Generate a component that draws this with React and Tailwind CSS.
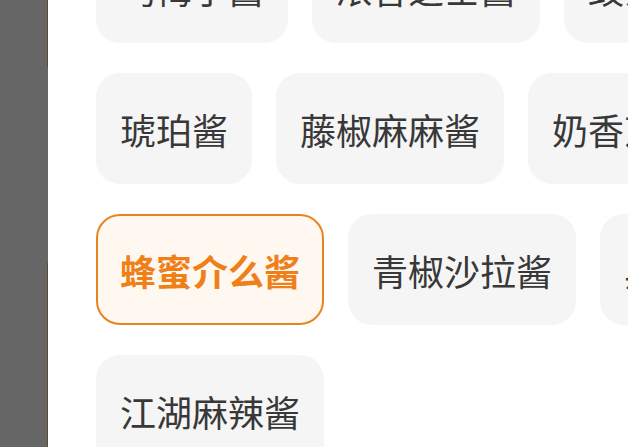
import React from "react";

const rows = [
  ["乌梅子酱", "浓香芝士酱", "豉汁酱"],
  ["琥珀酱", "藤椒麻麻酱", "奶香芝士酱"],
  ["蜂蜜介么酱", "青椒沙拉酱", "黑椒牛排酱"],
  ["江湖麻辣酱"],
];

const selected = "蜂蜜介么酱";

function Chip({ label }) {
  const active = label === selected;
  return (
    <div
      className={
        active
          ? "shrink-0 h-[111px] px-[22px] flex items-center rounded-[24px] border-2 border-[#e8841e] bg-[#fff8f1] text-[#ef8019] font-bold text-[36px] leading-none whitespace-nowrap"
          : "shrink-0 h-[111px] px-[24px] flex items-center rounded-[24px] bg-[#f5f5f5] text-[#383838] text-[36px] leading-none whitespace-nowrap"
      }
    >
      {label}
    </div>
  );
}

export default function App() {
  return (
    <div
      className="w-[628px] h-[447px] overflow-hidden flex bg-white"
      style={{ fontFamily: '"Noto Sans CJK SC", "Noto Sans", sans-serif' }}
    >
      <div className="w-[48px] shrink-0 flex flex-col bg-[#666666]">
        <div className="h-[67px] border-r border-[#5e4c2a]" />
        <div className="h-[196px] border-r border-[#666666]" />
        <div className="flex-1 border-r border-[#5e4c2a]" />
      </div>
      <div className="flex-1 min-w-0 overflow-hidden pl-[48px] -mt-[68px] flex flex-col gap-[30px]">
        {rows.map((row, i) => (
          <div key={i} className="flex gap-[24px]">
            {row.map((label) => (
              <Chip key={label} label={label} />
            ))}
          </div>
        ))}
      </div>
    </div>
  );
}
